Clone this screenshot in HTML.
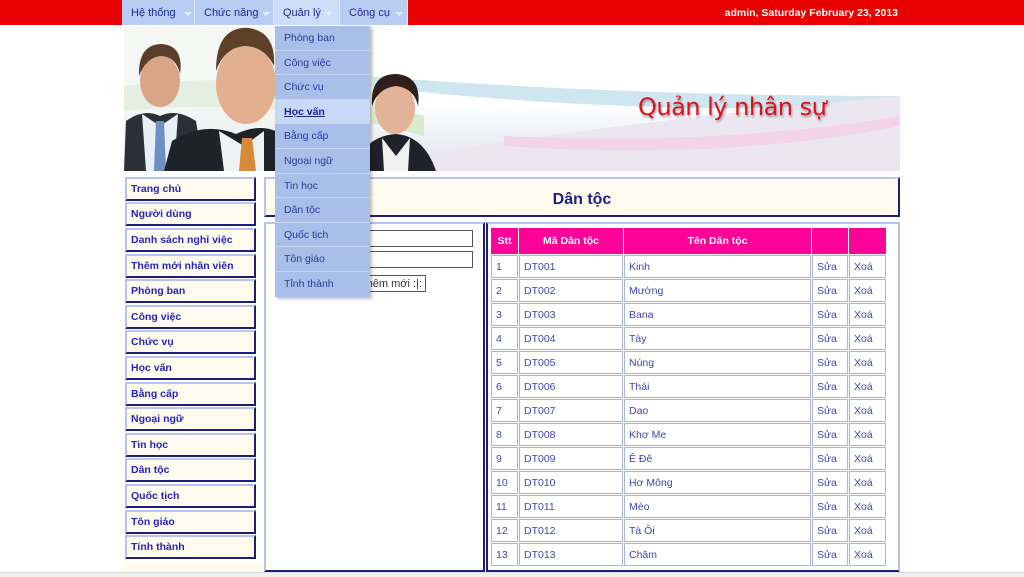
<!DOCTYPE html>
<html><head><meta charset="utf-8"><style>
*{margin:0;padding:0;box-sizing:border-box}
body{width:1024px;height:577px;overflow:hidden;background:#fff;font-family:"Liberation Sans",Arial,sans-serif;font-size:11px;position:relative}
.top{position:absolute;left:0;top:0;width:1024px;height:25px;background:#e80000}
.mi{position:absolute;top:0;height:25px;background:#b9cdf3;color:#1a2a9a;font-size:11px;line-height:26px;padding-left:9px;border-right:1px solid #dfe8fb}
.mi i{position:absolute;top:12px;width:0;height:0;border-left:4px solid transparent;border-right:4px solid transparent;border-top:4px solid #e8eefc}
.user{position:absolute;right:126px;top:7px;color:#fff;font-weight:bold;font-size:10.5px}
.banner{position:absolute;left:124px;top:26px;width:776px;height:145px;overflow:hidden;background:linear-gradient(180deg,#fff 0%,#fff 55%,#eef1f8 75%,#e6e2ee 100%)}
.side a{position:absolute;left:125px;width:131px;height:24px;background:#fffbee;border:2px solid #b6c3ee;border-right-color:#1d1d7a;border-bottom-color:#1d1d7a;color:#2424c0;font-weight:bold;font-size:10.5px;padding:4px 0 0 4px;text-decoration:none}
.hdr{position:absolute;left:264px;top:177px;width:636px;height:40px;background:#fffbee;border:2px solid #b6c3ee;border-right-color:#1d1d7a;border-bottom-color:#1d1d7a;text-align:center;font-weight:bold;font-size:16px;color:#1c1c8c;padding-top:12px}
.pl{position:absolute;left:264px;top:222px;width:221px;height:350px;border:2px solid #b6c3ee;border-right-color:#1d1d7a;border-bottom-color:#1d1d7a;background:#fff}
.pr{position:absolute;left:486px;top:222px;width:414px;height:350px;border:2px solid #b6c3ee;border-left-color:#1d1d7a;border-bottom-color:#1d1d7a;background:#fff}
table{position:absolute;left:490px;top:227px;border-collapse:separate;border-spacing:1px}
td,th{height:23px;border:1px solid #a9b6d6;color:#3a44bc;font-size:10.5px;padding-left:4px;text-align:left}
th{background:#ff0099;color:#fff;font-weight:bold;text-align:center;padding:0;height:26px;border-color:#ff0099}
.dd{position:absolute;left:275px;top:26px;width:95px;height:271px;background:#a9bfe9;box-shadow:2px 2px 3px rgba(0,0,0,.25)}
.dd div{height:24.6px;border-bottom:1px solid #c5d5f3;color:#2a3a9a;font-size:10.5px;padding:6px 0 0 9px}
.dd .h{background:#c8d8f7;text-decoration:underline;font-weight:bold;color:#1a2590}
.inp{position:absolute;left:368px;width:105px;height:17px;border:1px solid #555;background:#fff}
</style></head><body>
<div class="top"></div>
<div class="mi" style="left:122px;width:73px">Hệ thống<i style="left:62px"></i></div>
<div class="mi" style="left:195px;width:79px">Chức năng<i style="left:67px"></i></div>
<div class="mi" style="left:274px;width:66px;background:#cddcf8">Quản lý<i style="left:51px"></i></div>
<div class="mi" style="left:340px;width:68px">Công cụ<i style="left:55px"></i></div>
<div class="user">admin, Saturday February 23, 2013</div>
<div class="banner">
<svg width="776" height="145" style="position:absolute;left:0;top:0">
<path d="M0 60 Q150 40 300 90 L300 110 Q150 70 0 85Z" fill="#d8eccd"/>
<path d="M240 50 Q500 70 776 70 L776 80 Q500 90 240 60Z" fill="#cfe6f0"/>
<path d="M200 145 Q450 100 776 70 L776 145Z" fill="#ebe6f0"/>
<path d="M380 110 Q600 120 776 90 L776 100 Q600 135 380 120Z" fill="#f3d3ea"/>
<rect x="0" y="0" width="250" height="145" fill="#eef2ee" opacity=".6"/>
<path d="M0 145 L2 95 Q20 82 36 90 Q52 82 72 95 L80 145Z" fill="#2b2f38"/>
<path d="M18 88 L36 100 L54 88 L50 145 L22 145Z" fill="#e8eef5"/>
<path d="M32 95 L40 95 L42 145 L30 145Z" fill="#6d8fc2"/>
<ellipse cx="36" cy="55" rx="20" ry="26" fill="#d9a589"/>
<path d="M15 50 Q14 18 38 18 Q60 20 56 48 Q52 30 36 30 Q22 32 15 50Z" fill="#5a3d2a"/>
<path d="M40 145 L48 115 Q80 95 112 108 Q140 95 160 110 L155 145Z" fill="#1f2229"/>
<path d="M95 105 L120 120 L140 105 L140 145 L100 145Z" fill="#eef1f4"/>
<path d="M118 112 L128 112 L132 145 L115 145Z" fill="#d88a3a"/>
<ellipse cx="122" cy="58" rx="30" ry="40" fill="#e3b08f"/>
<path d="M92 45 Q92 0 125 2 Q152 6 150 40 Q140 20 120 20 Q100 22 92 45Z" fill="#5e3f28"/>
<path d="M228 145 Q240 110 272 108 Q300 110 312 145Z" fill="#1f2229"/>
<path d="M258 112 L272 130 L286 112 L284 145 L260 145Z" fill="#f1f1f1"/>
<ellipse cx="271" cy="82" rx="20" ry="26" fill="#e2b299"/>
<path d="M248 80 Q246 48 272 48 Q298 50 294 80 Q290 62 272 60 Q254 62 248 80Z" fill="#2e2018"/>
</svg>
<div style="position:absolute;left:514px;top:67px;font-size:24px;color:#e0101a;font-family:'DejaVu Sans','Liberation Sans',sans-serif;text-shadow:1px 2px 2px rgba(0,0,0,.35);letter-spacing:-0.5px">Quản lý nhân sự</div>
</div>
<div class="side">
<a style="top:177px">Trang chủ</a><a style="top:202px">Người dùng</a><a style="top:228px">Danh sách nghỉ việc</a><a style="top:254px">Thêm mới nhân viên</a><a style="top:279px">Phòng ban</a><a style="top:305px">Công việc</a><a style="top:330px">Chức vụ</a><a style="top:356px">Học vấn</a><a style="top:382px">Bằng cấp</a><a style="top:407px">Ngoại ngữ</a><a style="top:433px">Tin học</a><a style="top:458px">Dân tộc</a><a style="top:484px">Quốc tịch</a><a style="top:510px">Tôn giáo</a><a style="top:535px">Tỉnh thành</a>
</div>
<div style="position:absolute;left:124px;top:561px;width:140px;height:11px;background:#fffbee"></div>
<div class="hdr">Dân tộc</div>
<div class="pl"></div>
<div class="inp" style="top:230px"></div>
<div class="inp" style="top:251px"></div>
<div style="position:absolute;left:355px;top:275px;width:71px;height:17px;border:1px solid #555;font-size:11px;padding:2px 0 0 0;color:#333;text-align:right;padding-right:3px">Thêm mới :|:</div>
<div class="pr"></div>
<table>
<tr><th style="width:27px">Stt</th><th style="width:104px">Mã Dân tộc</th><th style="width:187px">Tên Dân tộc</th><th style="width:36px"></th><th style="width:37px"></th></tr>
<tr><td>1</td><td>DT001</td><td>Kinh</td><td>Sửa</td><td>Xoá</td></tr>
<tr><td>2</td><td>DT002</td><td>Mường</td><td>Sửa</td><td>Xoá</td></tr>
<tr><td>3</td><td>DT003</td><td>Bana</td><td>Sửa</td><td>Xoá</td></tr>
<tr><td>4</td><td>DT004</td><td>Tày</td><td>Sửa</td><td>Xoá</td></tr>
<tr><td>5</td><td>DT005</td><td>Nùng</td><td>Sửa</td><td>Xoá</td></tr>
<tr><td>6</td><td>DT006</td><td>Thái</td><td>Sửa</td><td>Xoá</td></tr>
<tr><td>7</td><td>DT007</td><td>Dao</td><td>Sửa</td><td>Xoá</td></tr>
<tr><td>8</td><td>DT008</td><td>Khơ Me</td><td>Sửa</td><td>Xoá</td></tr>
<tr><td>9</td><td>DT009</td><td>Ê Đê</td><td>Sửa</td><td>Xoá</td></tr>
<tr><td>10</td><td>DT010</td><td>Hơ Mông</td><td>Sửa</td><td>Xoá</td></tr>
<tr><td>11</td><td>DT011</td><td>Mèo</td><td>Sửa</td><td>Xoá</td></tr>
<tr><td>12</td><td>DT012</td><td>Tà Ôi</td><td>Sửa</td><td>Xoá</td></tr>
<tr><td>13</td><td>DT013</td><td>Chăm</td><td>Sửa</td><td>Xoá</td></tr>
</table>
<div class="dd">
<div>Phòng ban</div><div>Công việc</div><div>Chức vụ</div><div class="h">Học vấn</div><div>Bằng cấp</div><div>Ngoại ngữ</div><div>Tin học</div><div>Dân tộc</div><div>Quốc tịch</div><div>Tôn giáo</div><div style="border:0">Tỉnh thành</div>
</div>
<div style="position:absolute;left:0;top:572px;width:1024px;height:5px;background:#f0f0f0;border-top:1px solid #ddd"></div>
</body></html>
